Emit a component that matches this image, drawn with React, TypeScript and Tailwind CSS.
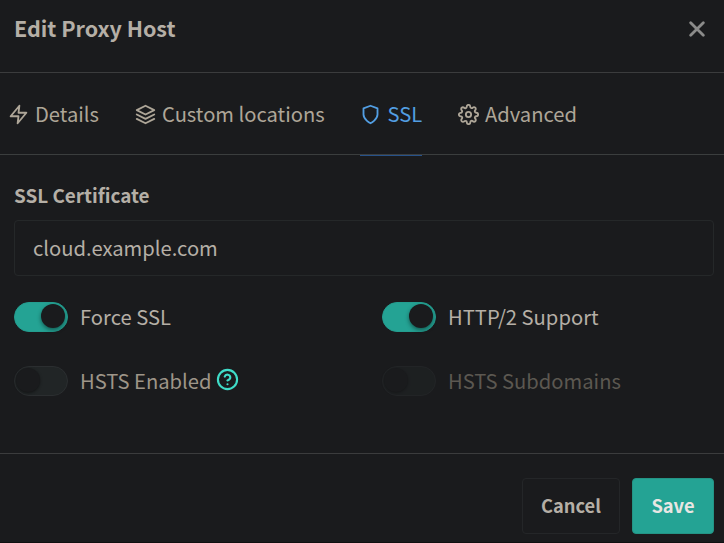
import type { ReactNode } from "react";
import { FiZap, FiLayers, FiShield, FiSettings, FiHelpCircle } from "react-icons/fi";

function Switch({ on = false, disabled = false }: { on?: boolean; disabled?: boolean }) {
  const track = on
    ? "border-[#249d8f] bg-[#24a394] justify-end pr-[2px]"
    : "border-[#2b2e30] bg-[#212526] justify-start pl-[1px]";
  const knob = on ? "shadow-[0_2px_4px_rgba(0,0,0,0.45)]" : "shadow-[0_1px_3px_rgba(0,0,0,0.45)]";
  return (
    <span className={`flex h-[30px] w-[54px] shrink-0 items-start rounded-full border pt-px ${track} ${disabled ? "opacity-50" : ""}`}>
      <span className={`size-6 rounded-full bg-[#1a1b1d] ${knob}`} />
    </span>
  );
}

function Option({ children, label, on, disabled }: { children?: ReactNode; label: string; on?: boolean; disabled?: boolean }) {
  const tone = on ? "text-[#b5afa6]" : disabled ? "text-[#5c5851]" : "text-[#9e9588]";
  return (
    <label className="flex h-[30px] items-center">
      <Switch on={on} disabled={disabled} />
      <span className={`ml-3 text-[20.2px] leading-[30px] ${tone}`}>{label}</span>
      {children}
    </label>
  );
}

export default function App() {
  return (
    <div className="flex h-[543px] w-[724px] flex-col overflow-hidden border-b border-[#0f1011] bg-[#1a1b1d] font-['Noto_Sans_CJK_SC','Noto_Sans',sans-serif] text-[#b5afa6]">
      <header className="flex h-[73px] shrink-0 items-start justify-between border-b border-[#3b3c3d] pl-[14px] pr-[19px] pt-[13px]">
        <h1 className="text-[21.5px] font-bold leading-[30px]">Edit Proxy Host</h1>
        <svg className="mt-[8px] size-4" viewBox="0 0 16 16" fill="none" stroke="#8b8b8a" strokeWidth="2.8" strokeLinecap="round">
          <path d="M1.7 1.7 14.3 14.3M14.3 1.7 1.7 14.3" />
        </svg>
      </header>

      <nav className="flex h-[82px] shrink-0 border-b border-[#3b3e3e] pl-2 text-[20.17px] text-[#aea698]">
        <a className="flex h-[82px] w-[91px] items-center gap-[6px]">
          <FiZap className="size-[21px] shrink-0" strokeWidth={2.1} />
          <span>Details</span>
        </a>
        <a className="ml-9 flex h-[82px] w-[190px] items-center gap-[6px] whitespace-nowrap">
          <FiLayers className="size-[21px] shrink-0" strokeWidth={2.1} />
          <span>Custom locations</span>
        </a>
        <a className="ml-[35px] flex h-[83px] w-[62px] items-center gap-[6px] border-b border-[#27528a] text-[#529ee2]">
          <FiShield className="size-[21px] shrink-0" strokeWidth={2.1} />
          <span className="ml-[0.5px]">SSL</span>
        </a>
        <a className="ml-9 flex h-[82px] items-center gap-[6px]">
          <FiSettings className="size-[21px] shrink-0" strokeWidth={2.1} />
          <span>Advanced</span>
        </a>
      </nav>

      <main className="flex h-[298px] shrink-0 flex-col px-[14px] pr-[10px] pt-[27px]">
        <h2 className="text-[18.9px] font-bold leading-[26px]">SSL Certificate</h2>
        <div className="mt-[12px] flex h-[56px] items-center rounded-[4px] border border-[#252829] pl-[18px] text-[20.2px]">
          cloud.example.com
        </div>
        <div className="mt-[26px] grid grid-cols-[368px_1fr] gap-y-[34px]">
          <Option label="Force SSL" on />
          <Option label="HTTP/2 Support" on />
          <Option label="HSTS Enabled">
            <FiHelpCircle className="mb-1 ml-1 size-[23px] text-[#3fdcc8]" strokeWidth={2.2} />
          </Option>
          <Option label="HSTS Subdomains" disabled />
        </div>
      </main>

      <footer className="flex flex-1 justify-end gap-3 border-t border-[#3b3c3d] pr-[10px] pt-[24px] text-[18.3px] font-bold leading-[28px]">
        <button className="h-[56px] w-[98px] rounded-[4px] border border-[#242628] pb-0.5">Cancel</button>
        <button className="h-[56px] w-[82px] rounded-[4px] border border-[#249485] bg-[#24a394] pb-0.5 text-[#e8e6e3]">Save</button>
      </footer>
    </div>
  );
}
